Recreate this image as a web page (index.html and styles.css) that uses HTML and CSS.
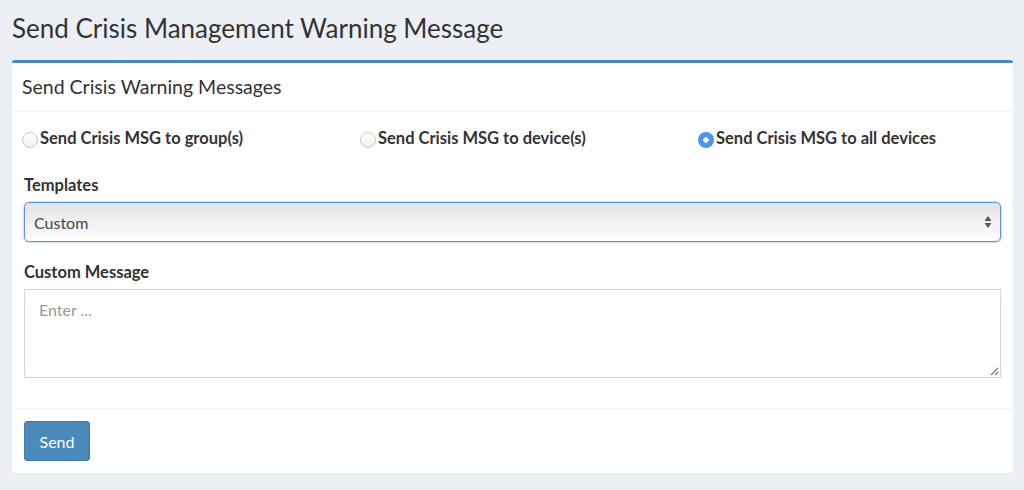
FILE: index.html
```html
<!DOCTYPE html>
<html>
<head>
<meta charset="utf-8">
<link rel="stylesheet" href="styles.css">
</head>
<body>
<section class="content-header">
  <h1>Send Crisis Management Warning Message</h1>
</section>
<section class="content">
  <div class="box">
    <div class="box-header">
      <h3>Send Crisis Warning Messages</h3>
    </div>
    <div class="box-body">
      <div class="radio-row">
        <label class="radio"><span class="dot"></span>Send Crisis MSG to group(s)</label>
        <label class="radio"><span class="dot"></span>Send Crisis MSG to device(s)</label>
        <label class="radio"><span class="dot checked"></span>Send Crisis MSG to all devices</label>
      </div>
      <div class="form-group">
        <div class="label">Templates</div>
        <div class="select">
          <span>Custom</span>
          <svg class="arrows" width="8" height="14" viewBox="0 0 8 14"><path d="M4 1 L7.5 6 H0.5 Z M4 13 L7.5 8 H0.5 Z" fill="#555"/></svg>
        </div>
      </div>
      <div class="form-group">
        <div class="label">Custom Message</div>
        <div class="textarea">
          <span class="placeholder">Enter ...</span>
          <svg class="grip" width="10" height="10" viewBox="0 0 10 10"><path d="M9 2 L2 9 M9 6 L6 9" stroke="#777" stroke-width="1.2"/></svg>
        </div>
      </div>
    </div>
    <div class="box-footer">
      <button class="btn">Send</button>
    </div>
  </div>
</section>
</body>
</html>
```
FILE: styles.css
```css
* { box-sizing: border-box; }
html, body {
  margin: 0;
  background: #ecf0f5;
  font-family: "Lato", "Source Sans Pro", sans-serif;
  color: #333;
}
.content-header {
  padding: 12px 12px 0 12px;
  height: 60px;
}
.content-header h1 {
  margin: 0;
  font-size: 26px;
  font-weight: 400;
  line-height: 32px;
}
.content {
  padding: 0 11px 0 12px;
}
.box {
  background: #fff;
  border-top: 3px solid #4a8ac0;
  border-radius: 3px;
  box-shadow: 0 1px 1px rgba(0,0,0,0.06);
}
.box-header {
  padding: 10px 10px;
  border-bottom: 1px solid #f4f4f4;
}
.box-header h3 {
  margin: 0;
  font-size: 19.5px;
  font-weight: 400;
  line-height: 28px;
}
.box-body {
  padding: 10px 10px 30px 10px;
}
.radio-row {
  display: flex;
  padding: 6px 0;
  height: 32px;
}
.radio {
  display: flex;
  align-items: center;
  font-size: 16.5px;
  font-weight: 700;
  line-height: 20px;
  flex: 0 0 338px;
}
.dot {
  width: 16px;
  height: 16px;
  border-radius: 50%;
  border: 1px solid #c8c8c8;
  background: linear-gradient(#fff, #f2f2f2);
  margin-right: 2px;
  margin-top: 3px;
  flex: none;
}
.dot.checked {
  border: none;
  background: radial-gradient(circle, #fff 0 2.5px, #4b95ef 3px);
}
.form-group {
  margin: 21px 2px 0 2px;
}
.form-group + .form-group {
  margin-top: 20px;
}
.label {
  font-size: 16.5px;
  font-weight: 700;
  line-height: 20px;
  margin-bottom: 7px;
}
.select {
  height: 40px;
  border: 1px solid #5d96cc;
  border-radius: 5px;
  background: linear-gradient(#e3e3e3, #f3f3f3 60%, #fcfcfc);
  box-shadow: 0 0 0 1px rgba(93,150,204,0.25);
  display: flex;
  align-items: center;
  justify-content: space-between;
  padding: 0 8px 0 9px;
  font-size: 16px;
  color: #444;
}
.textarea {
  position: relative;
  height: 89px;
  border: 1px solid #d2d6de;
  padding: 10px 14px;
  font-size: 16px;
}
.placeholder {
  color: #999;
}
.grip {
  position: absolute;
  right: 1px;
  bottom: 1px;
}
.box-footer {
  border-top: 1px solid #f4f4f4;
  padding: 12px 12px;
}
.btn {
  width: 66px;
  height: 40px;
  background: #4a89ba;
  border: 1px solid #3f7aa8;
  border-radius: 3px;
  color: #fff;
  font-family: inherit;
  font-size: 16px;
  padding: 0;
}
```
